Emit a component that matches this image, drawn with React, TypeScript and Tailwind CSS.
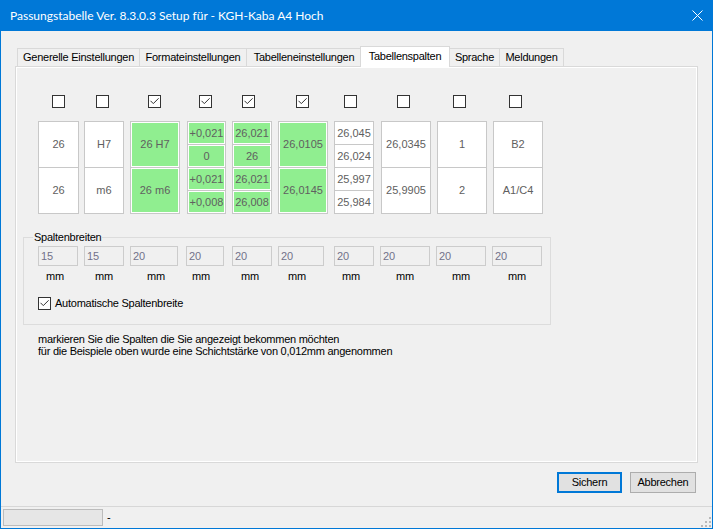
import React from "react";

type Col = {
  w: string;
  ml: string;
  kind: "single" | "quad";
  texts: string[];
  green: boolean;
};

const cols: Col[] = [
  { w: "w-[41px]", ml: "ml-[21px]", kind: "single", texts: ["26", "26"], green: false },
  { w: "w-[40px]", ml: "ml-[5px]", kind: "single", texts: ["H7", "m6"], green: false },
  { w: "w-[50px]", ml: "ml-[6px]", kind: "single", texts: ["26 H7", "26 m6"], green: true },
  { w: "w-[39px]", ml: "ml-[7px]", kind: "quad", texts: ["+0,021", "0", "+0,021", "+0,008"], green: true },
  { w: "w-[40px]", ml: "ml-[6px]", kind: "quad", texts: ["26,021", "26", "26,021", "26,008"], green: true },
  { w: "w-[50px]", ml: "ml-[6px]", kind: "single", texts: ["26,0105", "26,0145"], green: true },
  { w: "w-[40px]", ml: "ml-[6px]", kind: "quad", texts: ["26,045", "26,024", "25,997", "25,984"], green: false },
  { w: "w-[50px]", ml: "ml-[7px]", kind: "single", texts: ["26,0345", "25,9905"], green: false },
  { w: "w-[50px]", ml: "ml-[6px]", kind: "single", texts: ["1", "2"], green: false },
  { w: "w-[50px]", ml: "ml-[6px]", kind: "single", texts: ["B2", "A1/C4"], green: false },
];

const checks: { ml: string; checked: boolean }[] = [
  { ml: "ml-[35px]", checked: false },
  { ml: "ml-[31px]", checked: false },
  { ml: "ml-[39px]", checked: true },
  { ml: "ml-[38px]", checked: true },
  { ml: "ml-[30px]", checked: true },
  { ml: "ml-[41px]", checked: true },
  { ml: "ml-[35px]", checked: false },
  { ml: "ml-[40px]", checked: false },
  { ml: "ml-[43px]", checked: false },
  { ml: "ml-[43px]", checked: false },
];

const inputs: { ml: string; w: string; v: string }[] = [
  { ml: "ml-[14px]", w: "w-[40px]", v: "15" },
  { ml: "ml-[6px]", w: "w-[40px]", v: "15" },
  { ml: "ml-[6px]", w: "w-[48px]", v: "20" },
  { ml: "ml-[8px]", w: "w-[38px]", v: "20" },
  { ml: "ml-[8px]", w: "w-[40px]", v: "20" },
  { ml: "ml-[6px]", w: "w-[46px]", v: "20" },
  { ml: "ml-[10px]", w: "w-[40px]", v: "20" },
  { ml: "ml-[6px]", w: "w-[50px]", v: "20" },
  { ml: "ml-[6px]", w: "w-[50px]", v: "20" },
  { ml: "ml-[6px]", w: "w-[50px]", v: "20" },
];

const mms: string[] = [
  "ml-[22px]",
  "ml-[31px]",
  "ml-[34px]",
  "ml-[27px]",
  "ml-[31px]",
  "ml-[29px]",
  "ml-[36px]",
  "ml-[36px]",
  "ml-[38px]",
  "ml-[38px]",
];

function CheckBox({ checked, className = "" }: { checked: boolean; className?: string }) {
  return (
    <div
      className={`w-[13px] h-[13px] shrink-0 border border-[#333333] bg-white flex items-center justify-center ${className}`}
    >
      {checked && (
        <svg width="11" height="11" viewBox="0 0 11 11">
          <polyline points="1.5,4.8 4.3,7.6 9.6,2.3" fill="none" stroke="#333333" strokeWidth="1" />
        </svg>
      )}
    </div>
  );
}

function Cell({ text, green, cls }: { text: string; green: boolean; cls: string }) {
  return (
    <div className={`border border-[#c8c8c8] bg-white p-[1px] flex ${cls}`}>
      <div className={`flex-1 flex items-center justify-center ${green ? "bg-[#90ee90]" : ""}`}>{text}</div>
    </div>
  );
}

function Column({ c }: { c: Col }) {
  return (
    <div className={`flex flex-col ${c.w} ${c.ml}`}>
      {c.kind === "single" ? (
        <>
          <Cell text={c.texts[0]} green={c.green} cls="h-[47px]" />
          <Cell text={c.texts[1]} green={c.green} cls="h-[46px] border-t-0" />
        </>
      ) : (
        <>
          <Cell text={c.texts[0]} green={c.green} cls="h-[24px]" />
          <Cell text={c.texts[1]} green={c.green} cls="h-[23px] border-t-0" />
          <Cell text={c.texts[2]} green={c.green} cls="h-[23px] border-t-0" />
          <Cell text={c.texts[3]} green={c.green} cls="h-[23px] border-t-0" />
        </>
      )}
    </div>
  );
}

export default function App() {
  return (
    <div className="w-[713px] h-[529px] flex flex-col bg-[#f0f0f0] border-x border-b border-[#0078d7] text-[11px] tracking-[-0.25px] text-black font-['Liberation_Sans',Arial,sans-serif] overflow-hidden">
      {/* Title bar */}
      <div className="h-[31px] shrink-0 bg-[#0078d7] flex items-center justify-between pl-[9px] pr-[9px] text-white text-[12px] tracking-normal font-['Lato',sans-serif]">
        <span>Passungstabelle Ver. 8.3.0.3 Setup für - KGH-Kaba A4 Hoch</span>
        <svg width="11" height="11" viewBox="0 0 11 11">
          <line x1="0.5" y1="0.5" x2="10.5" y2="10.5" stroke="white" strokeWidth="1" />
          <line x1="10.5" y1="0.5" x2="0.5" y2="10.5" stroke="white" strokeWidth="1" />
        </svg>
      </div>

      {/* Main */}
      <div className="flex-1 flex flex-col">
        {/* Tabs */}
        <div className="mt-[15px] h-[20px] flex items-end pl-[16px]">
          <div className="w-[123px] h-[18px] border-x border-t border-[#d9d9d9] bg-[#f0f0f0] flex items-center justify-center">
            Generelle Einstellungen
          </div>
          <div className="w-[108px] h-[18px] -ml-px border-x border-t border-[#d9d9d9] bg-[#f0f0f0] flex items-center justify-center">
            Formateinstellungen
          </div>
          <div className="w-[116px] h-[18px] -ml-px border-x border-t border-[#d9d9d9] bg-[#f0f0f0] flex items-center justify-center">
            Tabelleneinstellungen
          </div>
          <div className="relative z-10 w-[90px] h-[21px] -ml-[2px] -mb-px border-x border-t border-[#d9d9d9] bg-white flex items-center justify-center pb-[1px]">
            Tabellenspalten
          </div>
          <div className="w-[51px] h-[18px] -ml-px border-x border-t border-[#d9d9d9] bg-[#f0f0f0] flex items-center justify-center">
            Sprache
          </div>
          <div className="w-[65px] h-[18px] -ml-px border-x border-t border-[#d9d9d9] bg-[#f0f0f0] flex items-center justify-center">
            Meldungen
          </div>
        </div>

        {/* Panel */}
        <div className="ml-[14px] w-[683px] h-[397px] border border-[#d9d9d9]">
          <div className="h-full border border-white flex flex-col">
            {/* Checkboxes */}
            <div className="mt-[27px] flex">
              {checks.map((c, i) => (
                <CheckBox key={i} checked={c.checked} className={c.ml} />
              ))}
            </div>

            {/* Cells */}
            <div className="mt-[13px] flex text-[#606060] tracking-normal">
              {cols.map((c, i) => (
                <Column key={i} c={c} />
              ))}
            </div>

            {/* Group box */}
            <div className="relative mt-[23px] ml-[6px] w-[528px] h-[88px] border border-[#dcdcdc] flex flex-col">
              <span className="absolute -top-[7px] left-[9px] px-[1px] bg-[#f0f0f0] leading-[13px]">
                Spaltenbreiten
              </span>
              <div className="mt-[8px] flex">
                {inputs.map((inp, i) => (
                  <div
                    key={i}
                    className={`${inp.ml} ${inp.w} h-[20px] border border-[#cccccc] bg-[#f0f0f0] flex items-center pl-[2px] text-[#72728a] tracking-normal`}
                  >
                    {inp.v}
                  </div>
                ))}
              </div>
              <div className="mt-[4px] flex leading-[13px]">
                {mms.map((m, i) => (
                  <div key={i} className={`${m} w-[18px] text-center`}>
                    mm
                  </div>
                ))}
              </div>
              <div className="mt-[14px] ml-[14px] flex items-center">
                <CheckBox checked={true} />
                <span className="ml-[4px] leading-[13px]">Automatische Spaltenbreite</span>
              </div>
            </div>

            {/* Description */}
            <div className="mt-[8px] ml-[21px] leading-[12px]">
              <div>markieren Sie die Spalten die Sie angezeigt bekommen möchten</div>
              <div>für die Beispiele oben wurde eine Schichtstärke von 0,012mm angenommen</div>
            </div>
          </div>
        </div>

        {/* Buttons */}
        <div className="mt-[9px] flex justify-end pr-[16px] gap-[8px]">
          <div className="w-[65px] h-[21px] border-2 border-[#0078d7] bg-[#e1e1e1] flex items-center justify-center">
            Sichern
          </div>
          <div className="w-[66px] h-[21px] border border-[#adadad] bg-[#e1e1e1] flex items-center justify-center">
            Abbrechen
          </div>
        </div>
      </div>

      {/* Status bar */}
      <div className="h-[22px] shrink-0 border-t border-[#d7d7d7] flex items-start">
        <div className="mt-[2px] ml-[2px] w-[100px] h-[17px] border border-[#bcbcbc] bg-[#e6e6e6]" />
        <div className="mt-[2px] ml-[4px] h-[17px] flex items-center">-</div>
        <svg className="ml-auto self-end mb-[1px] mr-[1px]" width="10" height="10" viewBox="0 0 10 10">
          <rect x="8" y="0" width="2" height="2" fill="#b8b8b8" />
          <rect x="4" y="4" width="2" height="2" fill="#b8b8b8" />
          <rect x="8" y="4" width="2" height="2" fill="#b8b8b8" />
          <rect x="0" y="8" width="2" height="2" fill="#b8b8b8" />
          <rect x="4" y="8" width="2" height="2" fill="#b8b8b8" />
          <rect x="8" y="8" width="2" height="2" fill="#b8b8b8" />
        </svg>
      </div>
    </div>
  );
}
